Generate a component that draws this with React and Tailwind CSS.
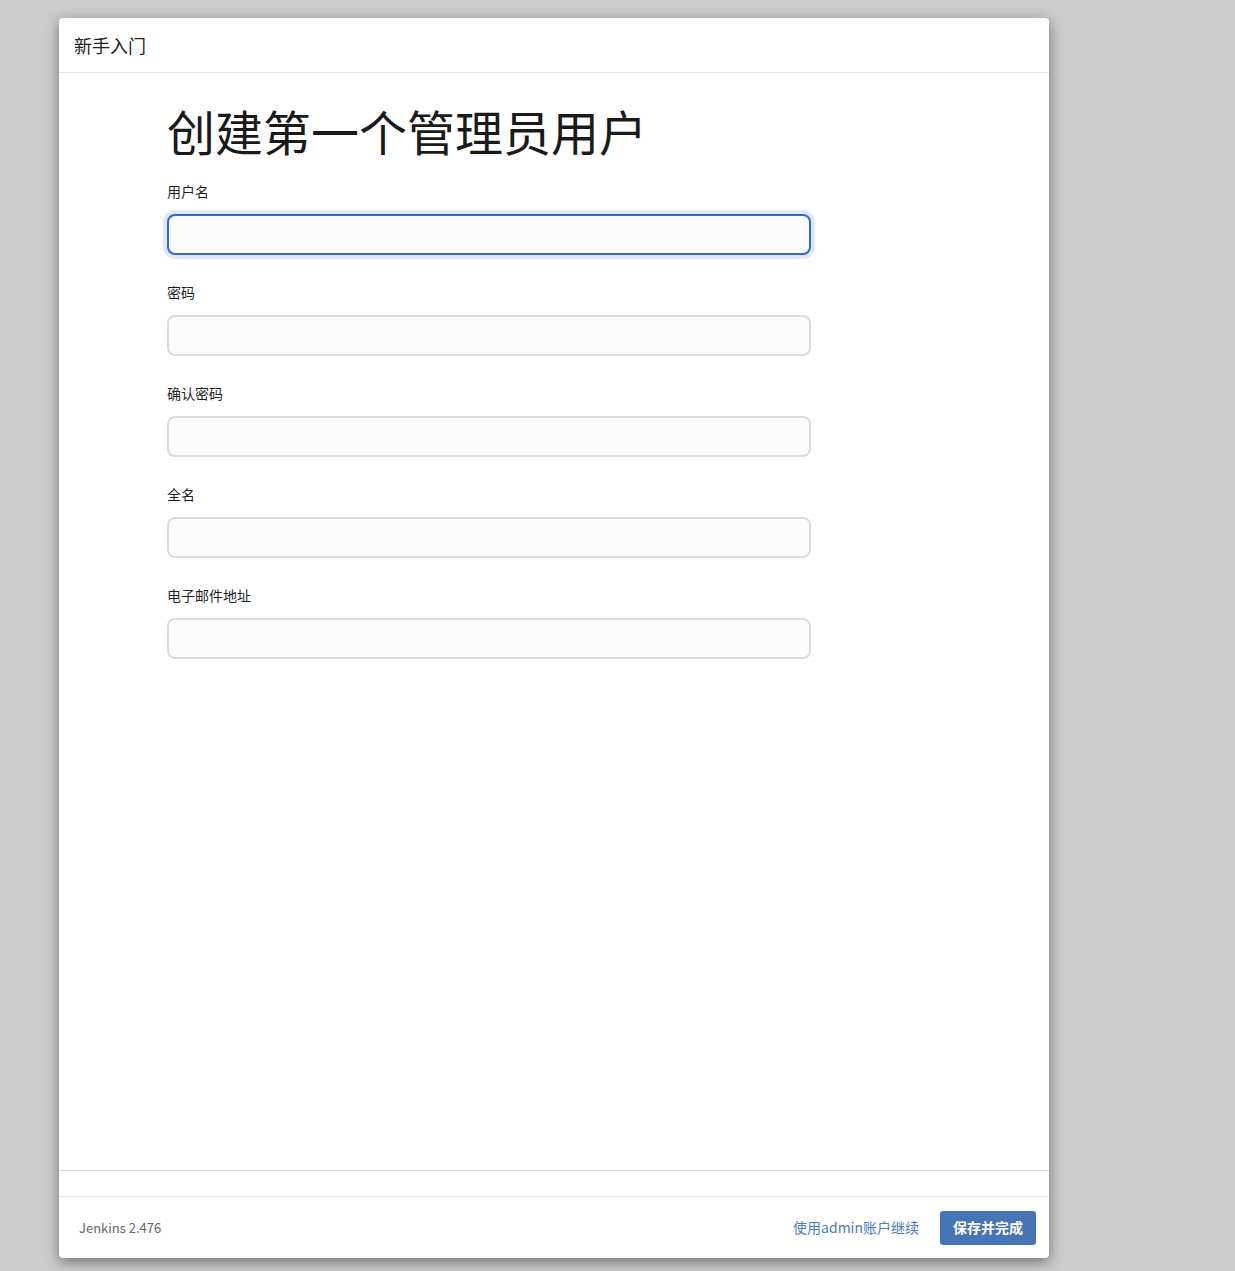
import React from 'react';

const font = { fontFamily: '"Noto Sans CJK SC", "Noto Sans", "Liberation Sans", sans-serif' };

const fields = [
  { label: '用户名', type: 'text', focused: true },
  { label: '密码', type: 'password' },
  { label: '确认密码', type: 'password' },
  { label: '全名', type: 'text' },
  { label: '电子邮件地址', type: 'text' },
];

const Field = ({ label, type, focused }) => (
  <div className="mb-[27px]">
    <label className="block text-[14px] leading-[20px] text-[#1f1f1f] mb-[13px]">{label}</label>
    <input
      type={type}
      className={
        'block w-[644px] h-[41px] rounded-[8px] border-2 bg-[#fcfcfd] px-3 outline-none ' +
        (focused ? 'border-[#2f66d8] ring-4 ring-[#e1e8fb]' : 'border-[#d9dbe3]')
      }
    />
  </div>
);

export default function App() {
  return (
    <div className="min-h-screen bg-[#cccccc] pt-[18px] pl-[59px]" style={font}>
      <div className="w-[990px] h-[1240px] bg-white rounded-[4px] shadow-[0_4px_14px_rgba(0,0,0,0.45)] flex flex-col">
        {/* header */}
        <div className="h-[55px] flex items-center pl-[15px] border-b border-[#e5e5e5] shrink-0">
          <h4 className="text-[18px] text-[#222]">新手入门</h4>
        </div>

        {/* body */}
        <div className="flex-1 pl-[108px] pt-[28px] border-b border-[#d4d4d4]">
          <h1 className="text-[48px] leading-[58px] text-[#1a1a1a] mb-[22px]">创建第一个管理员用户</h1>
          {fields.map((f) => (
            <Field key={f.label} {...f} />
          ))}
        </div>

        <div className="h-[25px] shrink-0" />

        {/* footer */}
        <div className="h-[62px] shrink-0 border-t border-[#e5e5e5] flex items-center justify-between pl-[20px] pr-[13px]">
          <span className="text-[13px] text-[#666]">Jenkins 2.476</span>
          <div className="flex items-center gap-[21px]">
            <a href="#" className="text-[14px] text-[#4b7bc0]">使用admin账户继续</a>
            <button className="h-[34px] px-[13px] rounded-[3px] bg-[#4674b4] text-white text-[14px] font-semibold">保存并完成</button>
          </div>
        </div>
      </div>
    </div>
  );
}
